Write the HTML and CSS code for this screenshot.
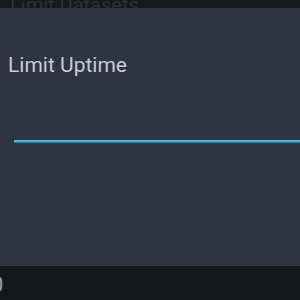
FILE: index.html
```html
<!DOCTYPE html>
<html lang="en">
<head>
    <meta charset="UTF-8">
    <meta name="viewport" content="width=device-width, initial-scale=1.0">
    <title>Limit Uptime</title>
    <link rel="stylesheet" href="styles.css">
</head>
<body>

<div class="screen">
    <div class="backdrop-top">
        <span class="backdrop-text">Limit Datasets</span>
    </div>

    <div class="dialog">
        <div class="dialog-title">Limit Uptime</div>
        <div class="dialog-input">
            <div class="input-line"></div>
        </div>
    </div>

    <div class="backdrop-bottom">
        <span class="backdrop-value">0</span>
    </div>
</div>

</body>
</html>
```

FILE: styles.css
```css
body {
    margin: 0;
    padding: 0;
    background-color: #15191d;
    font-family: Roboto, 'Noto Sans', sans-serif;
}

.screen {
    width: 300px;
    height: 300px;
    overflow: hidden;
    display: flex;
    flex-direction: column;
}

.backdrop-top {
    height: 8px;
    overflow: hidden;
    background-color: #16191f;
    position: relative;
}

.backdrop-text {
    position: absolute;
    left: 10px;
    bottom: -7px;
    font-size: 20px;
    line-height: 20px;
    color: #2c3038;
}

.dialog {
    height: 258px;
    background-color: #2e3441;
    display: flex;
    flex-direction: column;
}

.dialog-title {
    padding: 45px 0 0 8px;
    font-size: 21px;
    line-height: 25px;
    color: #c7cbd3;
}

.dialog-input {
    padding: 62px 0 0 14px;
}

.input-line {
    height: 3px;
    background: linear-gradient(#67c6e6, #3aa8d0 50%, #1c7393);
}

.backdrop-bottom {
    flex: 1;
    background-color: #14181b;
    position: relative;
    overflow: hidden;
}

.backdrop-value {
    position: absolute;
    left: -9px;
    top: 6px;
    font-size: 22px;
    color: #9a9ea5;
}
```
